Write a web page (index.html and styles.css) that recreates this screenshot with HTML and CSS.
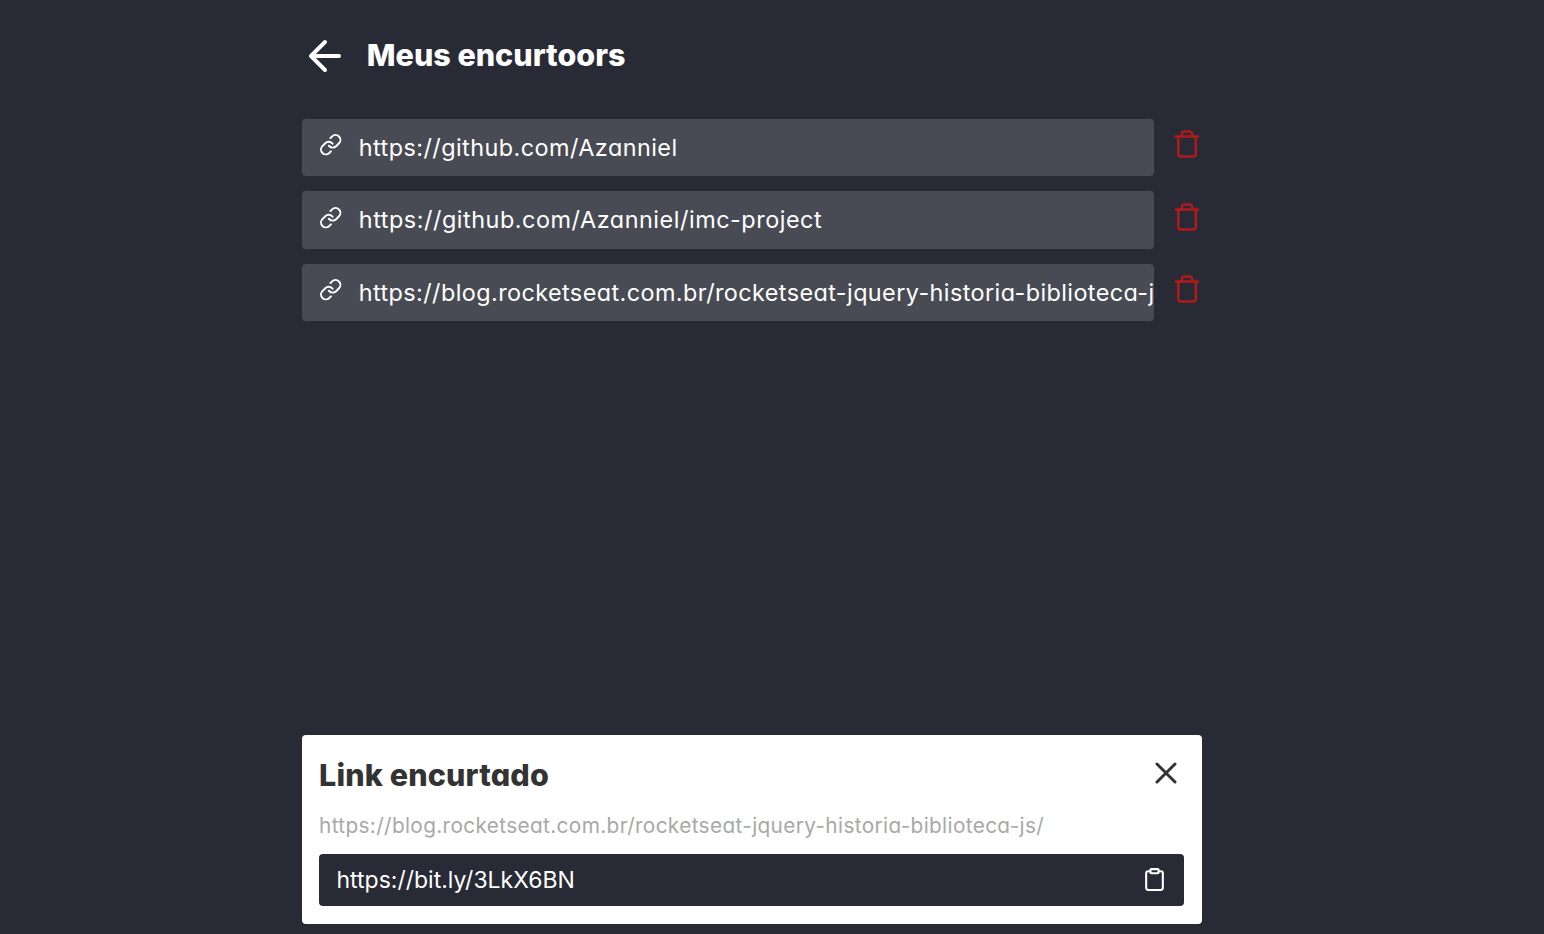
FILE: index.html
```
<!DOCTYPE html>
<html lang="pt-BR">
<head>
<meta charset="utf-8">
<title>Meus encurtoors</title>
<link rel="stylesheet" href="styles.css">
</head>
<body>
<svg class="defs" width="0" height="0">
  <symbol id="link" viewBox="0 0 24 24"><path d="M10 13a5 5 0 0 0 7.54.54l3-3a5 5 0 0 0-7.07-7.07l-1.72 1.71"/><path d="M14 11a5 5 0 0 0-7.54-.54l-3 3a5 5 0 0 0 7.07 7.07l1.71-1.71"/></symbol>
  <symbol id="trash" viewBox="0 0 24 24"><path d="M3 6h18M19 6v14a2 2 0 0 1-2 2H7a2 2 0 0 1-2-2V6m3 0V4a2 2 0 0 1 2-2h4a2 2 0 0 1 2 2v2"/></symbol>
</svg>
<main class="page">
  <header class="header">
    <a class="back"><svg class="icon icon-back" viewBox="0 0 24 24"><path d="M19 12H5M12 19l-7-7 7-7"/></svg></a>
    <h1 class="title">Meus encurtoors</h1>
  </header>
  <ul class="list">
    <li class="item">
      <button class="link"><svg class="icon icon-link"><use href="#link"/></svg><span class="url">https://github.com/Azanniel</span></button>
      <button class="delete"><svg class="icon icon-trash"><use href="#trash"/></svg></button>
    </li>
    <li class="item">
      <button class="link"><svg class="icon icon-link"><use href="#link"/></svg><span class="url url-project">https://github.com/Azanniel/imc-project</span></button>
      <button class="delete"><svg class="icon icon-trash"><use href="#trash"/></svg></button>
    </li>
    <li class="item">
      <button class="link"><svg class="icon icon-link"><use href="#link"/></svg><span class="url url-blog">https://blog.rocketseat.com.br/rocketseat-jquery-historia-biblioteca-js/</span></button>
      <button class="delete"><svg class="icon icon-trash"><use href="#trash"/></svg></button>
    </li>
  </ul>
  <section class="card">
    <div class="card-head">
      <h2 class="card-title">Link encurtado</h2>
      <button class="close"><svg class="icon icon-close" viewBox="0 0 24 24"><path d="M18 6L6 18M6 6l12 12"/></svg></button>
    </div>
    <p class="long">https://blog.rocketseat.com.br/rocketseat-jquery-historia-biblioteca-js/</p>
    <div class="short">
      <span class="short-url">https://bit.ly/3LkX6BN</span>
      <svg class="icon icon-copy" viewBox="0 0 24 24"><path d="M16 4h2a2 2 0 0 1 2 2v14a2 2 0 0 1-2 2H6a2 2 0 0 1-2-2V6a2 2 0 0 1 2-2h2"/><rect x="8" y="2" width="8" height="4" rx="1"/></svg>
    </div>
  </section>
</main>
</body>
</html>
```
FILE: styles.css
```
* { box-sizing: border-box; margin: 0; padding: 0; }
body {
  background: #282a36;
  color: #fff;
  font-family: Inter, "Noto Sans", sans-serif;
  font-feature-settings: "cv11";
  height: 934px;
  overflow: hidden;
}
.defs { display: block; }
button { border: 0; background: none; color: inherit; font: inherit; font-feature-settings: inherit; }
.icon { display: block; flex: none; fill: none; stroke: currentColor; stroke-width: 2; stroke-linecap: round; stroke-linejoin: round; }
.page { width: 900px; height: 934px; margin-left: 302px; padding: 32px 0 10px; display: flex; flex-direction: column; }
.header { display: flex; align-items: center; height: 48px; }
.icon-back { width: 48px; height: 48px; margin-left: -0.6px; }
.title { margin: 0 0 3px 17.4px; font-size: 30.5px; font-weight: 800; line-height: 46px; letter-spacing: 0; white-space: nowrap; }
.list { list-style: none; display: grid; gap: 15px; margin-top: 38.8px; }
.item { display: flex; height: 57.45px; }
.link { width: 852px; height: 100%; display: flex; align-items: center; background: #494b54; border-radius: 4px; padding-left: 17px; overflow: hidden; }
.icon-link { width: 23.4px; height: 23.4px; margin-bottom: 5.4px; }
.url { margin-left: 16.4px; font-size: 23.4px; letter-spacing: 0.45px; white-space: nowrap; }
.url-project { letter-spacing: 0.54px; }
.url-blog { letter-spacing: 0.42px; padding-top: 1px; }
.delete { margin-left: 18px; height: 50.6px; display: flex; align-items: center; color: #b01a1a; }
.icon-trash { width: 30px; height: 30px; }
.card { margin-top: auto; height: 189px; background: #fff; border-radius: 4px; padding: 17px 17.6px 18px 17px; color: #333; }
.card-head { display: flex; height: 46px; align-items: center; justify-content: space-between; }
.card-title { font-size: 30.5px; font-weight: 800; letter-spacing: 0.15px; white-space: nowrap; margin-bottom: 2px; }
.icon-close { width: 36px; height: 36px; margin-bottom: 5px; }
.long { color: #a8a8a8; font-size: 20.8px; line-height: 32px; letter-spacing: 0.35px; margin-top: 12px; white-space: nowrap; }
.short { width: 865px; margin-top: 12px; height: 52px; display: flex; align-items: center; justify-content: space-between; background: #282a36; color: #fff; border-radius: 4px; padding: 0 17px 0 17.5px; font-size: 23px; }
.icon-copy { width: 25px; height: 25px; margin-bottom: 1px; }
```
